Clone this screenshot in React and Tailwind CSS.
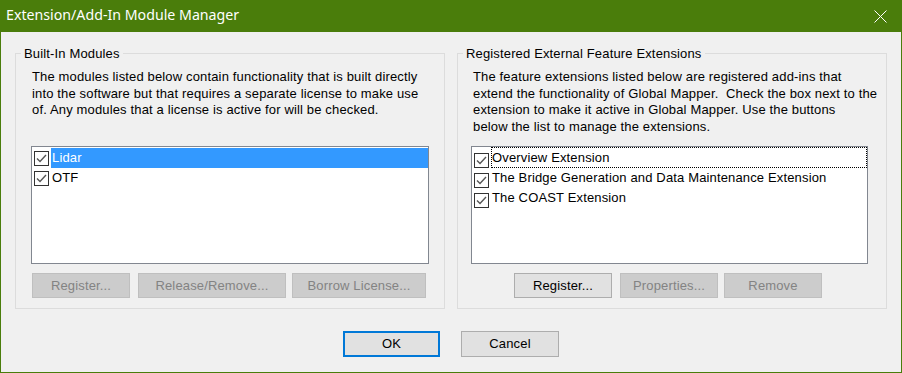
import React from "react";

function Check() {
  return (
    <svg width="15" height="15" viewBox="0 0 15 15" className="shrink-0 block">
      <rect x="0.5" y="0.5" width="14" height="14" fill="#ffffff" stroke="#333333" />
      <polyline points="3,7.5 6,10.5 12,4" fill="none" stroke="#555555" strokeWidth="1.4" />
    </svg>
  );
}

function Btn({ children, disabled, className = "" }) {
  return (
    <div
      className={
        "h-[25px] flex items-center justify-center border " +
        (disabled
          ? "bg-[#cccccc] border-[#bfbfbf] text-[#838383] "
          : "bg-[#e1e1e1] border-[#adadad] text-black ") +
        className
      }
    >
      {children}
    </div>
  );
}

export default function App() {
  return (
    <div className="w-[902px] h-[373px] bg-[#f0f0f0] border-x border-b border-[#4a7d0b] flex flex-col font-['Liberation_Sans',Arial,sans-serif] text-[13px] tracking-[0.15px] text-black overflow-hidden">
      <div className="h-[32px] shrink-0 bg-[#4a7d0b] flex items-center justify-between pl-[5px] pr-[14px] tracking-normal">
        <span className="font-['Noto_Sans',sans-serif] text-[14.2px] text-white leading-none pb-[2px]">
          Extension/Add-In Module Manager
        </span>
        <svg width="13" height="13" viewBox="0 0 13 13" className="block">
          <line x1="0.5" y1="0.5" x2="12.5" y2="12.5" stroke="#ffffff" strokeWidth="1" />
          <line x1="12.5" y1="0.5" x2="0.5" y2="12.5" stroke="#ffffff" strokeWidth="1" />
        </svg>
      </div>

      <div className="flex gap-[12px] px-[14px] pt-[14px]">
        <fieldset className="w-[430px] h-[263px] border border-[#dcdcdc] flex flex-col">
          <legend className="ml-[5px] px-[3px] leading-[15px]">Built-In Modules</legend>
          <div className="pl-[16px] mt-[8px] h-[77px] leading-[16.5px] whitespace-nowrap">
            The modules listed below contain functionality that is built directly
            <br />
            into the software but that requires a separate license to make use
            <br />
            of. Any modules that a license is active for will be checked.
          </div>
          <div className="mx-[15px] h-[118px] border border-[#828790] bg-white pt-[1px]">
            <div className="h-[20px] flex items-center pl-[2px]">
              <Check />
              <div className="ml-[2px] flex-1 h-full bg-[#3399ff] text-white flex items-center pl-[1px]">Lidar</div>
            </div>
            <div className="h-[20px] flex items-center pl-[2px]">
              <Check />
              <div className="ml-[2px] flex-1 h-full flex items-center pl-[1px]">OTF</div>
            </div>
          </div>
          <div className="flex mt-[9px] pl-[16px]">
            <Btn disabled className="w-[98px]">Register...</Btn>
            <Btn disabled className="w-[148px] ml-[8px]">Release/Remove...</Btn>
            <Btn disabled className="w-[134px] ml-[6px]">Borrow License...</Btn>
          </div>
        </fieldset>

        <fieldset className="w-[430px] h-[263px] border border-[#dcdcdc] flex flex-col">
          <legend className="ml-[5px] px-[3px] leading-[15px]">Registered External Feature Extensions</legend>
          <div className="pl-[15px] mt-[8px] h-[77px] leading-[16.5px] whitespace-nowrap">
            The feature extensions listed below are registered add-ins that
            <br />
            extend the functionality of Global Mapper.&nbsp; Check the box next to the
            <br />
            extension to make it active in Global Mapper. Use the buttons
            <br />
            below the list to manage the extensions.
          </div>
          <div className="ml-[13px] w-[397px] h-[118px] border border-[#828790] bg-white">
            <div className="h-[21px] flex items-end pl-[2px]">
              <Check />
              <div className="ml-[2px] flex-1 h-full border border-dotted border-black flex items-center">Overview Extension</div>
            </div>
            <div className="h-[20px] flex items-end pl-[2px]">
              <Check />
              <div className="ml-[2px] flex-1 h-full flex items-center pl-[1px]">The Bridge Generation and Data Maintenance Extension</div>
            </div>
            <div className="h-[20px] flex items-end pl-[2px]">
              <Check />
              <div className="ml-[2px] flex-1 h-full flex items-center pl-[1px]">The COAST Extension</div>
            </div>
          </div>
          <div className="flex mt-[9px] pl-[56px]">
            <Btn className="w-[98px]">Register...</Btn>
            <Btn disabled className="w-[98px] ml-[8px]">Properties...</Btn>
            <Btn disabled className="w-[98px] ml-[6px]">Remove</Btn>
          </div>
        </fieldset>
      </div>

      <div className="flex justify-center gap-[21px] mt-[22px]">
        <div className="w-[97px] h-[26px] border-2 border-[#0078d7] bg-[#e1e1e1] flex items-center justify-center">OK</div>
        <div className="w-[98px] h-[26px] border border-[#adadad] bg-[#e1e1e1] flex items-center justify-center">Cancel</div>
      </div>
    </div>
  );
}
